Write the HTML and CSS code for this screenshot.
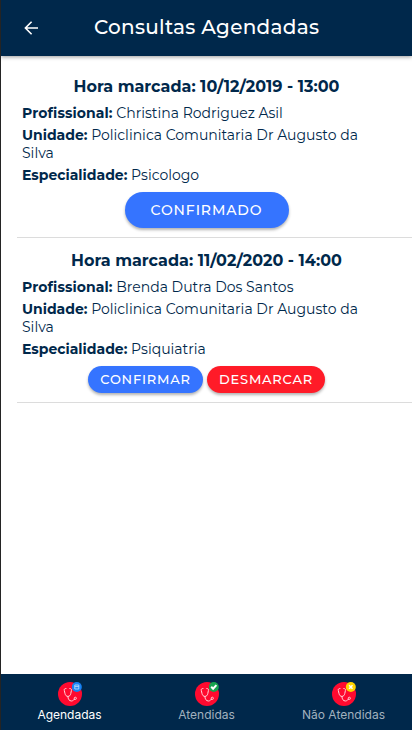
FILE: index.html
```html
<!DOCTYPE html>
<html lang="pt-BR">
<head>
<meta charset="utf-8">
<title>Consultas Agendadas</title>
<link rel="stylesheet" href="styles.css">
</head>
<body>
<svg width="0" height="0" class="defs">
  <symbol id="steth" viewBox="0 0 24 24">
    <circle cx="12" cy="12" r="12" fill="#ff0a2f"/>
    <path d="M8 6.5c-1.5 0-2 .7-1.7 2l.7 3c.4 1.800 1.400 2.900 2.900 2.900s2.600-1.100 2.900-2.900l.6-3c.3-1.300-.2-2-1.600-2M9.900 14.400c0 2.700 1.300 4.600 3.600 4.600 1.700 0 1.900-1.700 3-1.700" fill="none" stroke="#ffd6dc" stroke-width="1" stroke-linecap="round"/>
    <circle cx="17.300" cy="16.300" r="1.100" fill="none" stroke="#ffd6dc" stroke-width=".9"/>
  </symbol>
</svg>
<div class="app">
  <header class="toolbar">
    <svg class="back" viewBox="0 0 14 14"><path d="M7.600 .700 1.400 7l6.200 6.300M1.600 7h12.400" fill="none" stroke="#fff" stroke-width="1.600"/></svg>
    <h1>Consultas Agendadas</h1>
  </header>
  <main class="list">
    <section class="item">
      <h2>Hora marcada: 10/12/2019 - 13:00</h2>
      <p><b class="pro">Profissional:</b> Christina Rodriguez Asil</p>
      <p><b>Unidade:</b> Policlinica Comunitaria Dr Augusto da Silva</p>
      <p><b>Especialidade:</b> Psicologo</p>
      <div class="actions"><button class="btn large">CONFIRMADO</button></div>
    </section>
    <section class="item">
      <h2>Hora marcada: 11/02/2020 - 14:00</h2>
      <p><b class="pro">Profissional:</b> Brenda Dutra Dos Santos</p>
      <p><b>Unidade:</b> Policlinica Comunitaria Dr Augusto da Silva</p>
      <p><b>Especialidade:</b> Psiquiatria</p>
      <div class="actions"><button class="btn">CONFIRMAR</button><button class="btn danger">DESMARCAR</button></div>
    </section>
  </main>
  <nav class="tabs">
    <a class="tab active">
      <svg viewBox="0 0 24 24"><use href="#steth"/><circle cx="18.800" cy="5" r="5" fill="#1683f5"/><path d="M16.800 3h4v4h-4zM16.800 4.600h4" fill="none" stroke="#b9dcff" stroke-width=".9"/></svg>
      <span>Agendadas</span>
    </a>
    <a class="tab">
      <svg viewBox="0 0 24 24"><use href="#steth"/><circle cx="18.800" cy="5" r="5" fill="#16a34f"/><path d="m16.200 4.800 1.900 1.900 3.300-3.600" fill="none" stroke="#fff" stroke-width="2"/></svg>
      <span>Atendidas</span>
    </a>
    <a class="tab">
      <svg viewBox="0 0 24 24"><use href="#steth"/><circle cx="18.800" cy="5" r="5" fill="#ffd500"/><path d="m17.100 3.300 3.400 3.400m0-3.400-3.400 3.400" fill="none" stroke="#fff" stroke-width="1.500"/></svg>
      <span>Não Atendidas</span>
    </a>
  </nav>
</div>
</body>
</html>
```
FILE: styles.css
```css
* { box-sizing: border-box; }
body { margin: 0; background: #fff; color: #00284b; font-family: Montserrat, Inter, sans-serif; }
.defs { display: none; }
.app { height: 730px; border-left: 1px solid #242424; display: flex; flex-direction: column; overflow: hidden; }
.toolbar { height: 56px; flex: none; background: #00284b; color: #fff; display: flex; align-items: center; padding-left: 23px; box-shadow: 0 1px 4px rgba(0,0,0,.4); }
.back { width: 14px; height: 14px; flex: none; }
h1 { margin: 0 0 2px 56px; font-size: 20px; font-weight: 500; line-height: 24px; letter-spacing: .28px; white-space: nowrap; }
.list { flex: 1; padding: 8px 0 0 16px; }
.item { padding: 13px 0 9px 5px; border-bottom: 1px solid #dcdcdc; }
h2 { margin: 0 16px 7px 0; padding-right: 5px; text-align: center; font-size: 16px; line-height: 20px; font-weight: 700; white-space: nowrap; }
p { margin: 0 42px 4px 0; font-size: 14px; line-height: 18px; font-weight: 400; }
p b { font-weight: 700; }
.pro { letter-spacing: .1px; }
.actions { margin: 8px 21px 0 0; display: flex; justify-content: center; gap: 4px; }
.btn { width: 115px; height: 27px; padding: 0; border: 0; border-radius: 18px; background: #3574ff; color: #fff; font: 500 13px/27px Montserrat, Inter, sans-serif; letter-spacing: .78px; box-shadow: 0 2px 3px rgba(0,0,0,.3); }
.btn.large { width: 164px; height: 36px; font-size: 14px; line-height: 36px; letter-spacing: .88px; }
.btn.danger { width: 118px; background: #ff1b28; }
.tabs { height: 56px; flex: none; background: #00284b; display: grid; grid-template-columns: repeat(3, 1fr); }
.tab { display: flex; flex-direction: column; align-items: center; padding-top: 8px; color: #a2b1be; font: 12px/16px Inter, sans-serif; }
.tab svg { width: 24px; height: 24px; margin-bottom: 1px; }
.tab.active { color: #fff; }
```
